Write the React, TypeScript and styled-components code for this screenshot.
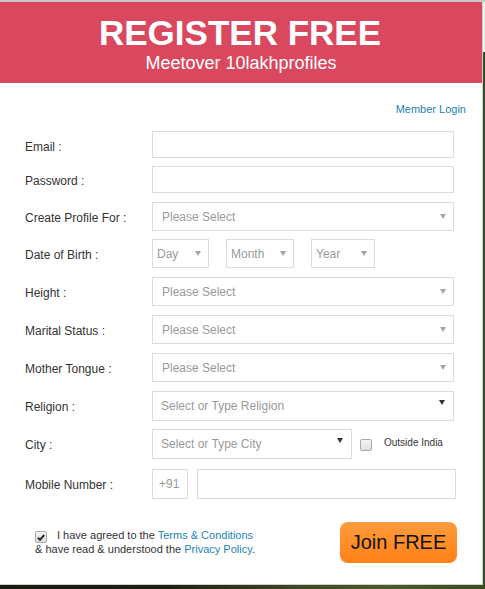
import React from "react";
import styled, { createGlobalStyle } from "styled-components";

const Global = createGlobalStyle`
  html, body { margin: 0; padding: 0; }
  body {
    font-family: "Liberation Sans", Arial, sans-serif;
    background:
      linear-gradient(#efefef, #efefef) top right / 10px 52px no-repeat,
      linear-gradient(90deg, #1a1a0e 0%, #202010 35%, #3d4522 60%, #4c5b2b 80%, #3b4a20 100%);
  }
`;

const Page = styled.div`
  border-top: 2px solid #c9c6c6;
  min-height: 587px;
`;

const Modal = styled.div`
  width: 482px;
  height: 582px;
  background: #fff;
  border-right: 1px solid #cfcfcf;
  border-bottom: 1px solid #cfcfcf;
  display: flex;
  flex-direction: column;
`;

const Header = styled.div`
  background: #d9485e;
  color: #fff;
  text-align: center;
  padding: 11px 0 10px;
`;

const Title = styled.div`
  font-size: 35px;
  line-height: 40px;
  font-weight: bold;
  margin-left: -2px;
`;

const Subtitle = styled.div`
  font-size: 18px;
  line-height: 20px;
`;

const LoginBar = styled.div`
  margin-top: 20px;
  padding-right: 16px;
  text-align: right;
  font-size: 11px;
  line-height: 13px;
`;

const Link = styled.a`
  color: #1d7fb8;
  text-decoration: none;
`;

const Rows = styled.div`
  margin-top: 15px;
  padding: 0 28px 0 25px;
  display: flex;
  flex-direction: column;
`;

const Row = styled.div<{ $mb?: number }>`
  display: grid;
  grid-template-columns: 127px 1fr;
  align-items: center;
  margin-bottom: ${(p) => p.$mb ?? 9}px;
`;

const Label = styled.div<{ $down?: number }>`
  font-size: 12px;
  color: #333;
  padding-top: ${(p) => p.$down ?? 2}px;
`;

const TextInput = styled.div<{ $h?: number }>`
  height: ${(p) => (p.$h ?? 27) - 2}px;
  border: 1px solid #dcdcdc;
  background: #fff;
`;

const SelectBox = styled.div<{ $w?: number; $h?: number; $pl?: number }>`
  box-sizing: border-box;
  width: ${(p) => (p.$w ? `${p.$w}px` : "auto")};
  height: ${(p) => p.$h ?? 29}px;
  border: 1px solid #dcdcdc;
  display: flex;
  align-items: center;
  justify-content: space-between;
  padding: 0 7px 0 ${(p) => p.$pl ?? 9}px;
  font-size: 12px;
  color: #9a9a9a;
`;

const Arrow = styled.span`
  width: 0;
  height: 0;
  border-left: 3px solid transparent;
  border-right: 3px solid transparent;
  border-top: 5px solid #a5a5a5;
`;

const ChosenBox = styled.div<{ $w?: number }>`
  box-sizing: border-box;
  width: ${(p) => (p.$w ? `${p.$w}px` : "auto")};
  height: 30px;
  border: 1px solid #dcdcdc;
  display: flex;
  align-items: center;
  justify-content: space-between;
  padding: 0 8px 0 8px;
  font-size: 12px;
  color: #9a9a9a;
`;

const DarkArrow = styled.span`
  align-self: flex-start;
  margin-top: 8px;
  width: 0;
  height: 0;
  border-left: 3.5px solid transparent;
  border-right: 3.5px solid transparent;
  border-top: 5px solid #333;
`;

const DobGroup = styled.div`
  display: flex;
  gap: 17px;
`;

const CityGroup = styled.div`
  display: flex;
  align-items: center;
`;

const CheckBox = styled.span`
  box-sizing: border-box;
  display: flex;
  align-items: center;
  justify-content: center;
  flex: none;
  width: 12px;
  height: 12px;
  border: 1px solid #a9a9a9;
  border-radius: 2px;
  background: linear-gradient(#f4f4f4, #dedede);
`;

const OutsideLabel = styled.span`
  font-size: 10px;
  color: #333;
  margin-left: 12px;
  margin-top: -3px;
`;

const CityCheck = styled(CheckBox)`
  margin-left: 8px;
  margin-top: 2px;
`;

const MobileGroup = styled.div`
  display: flex;
  gap: 9px;
  margin-right: -2px;
`;

const CodeBox = styled.div`
  box-sizing: border-box;
  width: 36px;
  height: 30px;
  border: 1px solid #dcdcdc;
  display: flex;
  align-items: center;
  padding-left: 6px;
  font-size: 12px;
  color: #9a9a9a;
`;

const MobileInput = styled.div`
  box-sizing: border-box;
  flex: 1;
  height: 30px;
  border: 1px solid #dcdcdc;
`;

const Footer = styled.div`
  margin-top: 23px;
  padding: 0 25px 0 35px;
  display: flex;
  align-items: center;
  justify-content: space-between;
`;

const Terms = styled.div`
  font-size: 11px;
  line-height: 13px;
  color: #333;
`;

const TermsLine = styled.div`
  display: flex;
  align-items: flex-start;
  white-space: pre;
`;

const TermsCheck = styled(CheckBox)`
  margin-top: 2px;
  margin-right: 10px;
`;

const JoinButton = styled.button`
  width: 117px;
  height: 41px;
  border: none;
  border-radius: 8px;
  background: linear-gradient(#ff9c3d, #ff8016);
  color: #111;
  font-family: "Liberation Sans", Arial, sans-serif;
  font-size: 20px;
  padding: 0;
  cursor: pointer;
`;

const Check = () => (
  <svg width="8" height="7" viewBox="0 0 8 7">
    <path d="M0.8 3.6 L3 5.8 L7.2 1" fill="none" stroke="#2a2a2a" strokeWidth="2" />
  </svg>
);

const Select = ({ text }: { text: string }) => (
  <SelectBox>
    <span>{text}</span>
    <Arrow />
  </SelectBox>
);

export default function App() {
  return (
    <>
      <Global />
      <Page>
        <Modal>
          <Header>
            <Title>REGISTER FREE</Title>
            <Subtitle>Meetover 10lakhprofiles</Subtitle>
          </Header>
          <LoginBar>
            <Link href="#">Member Login</Link>
          </LoginBar>
          <Rows>
            <Row $mb={8}>
              <Label $down={4}>Email :</Label>
              <TextInput />
            </Row>
            <Row>
              <Label $down={3}>Password :</Label>
              <TextInput />
            </Row>
            <Row $mb={8}>
              <Label>Create Profile For :</Label>
              <Select text="Please Select" />
            </Row>
            <Row>
              <Label>Date of Birth :</Label>
              <DobGroup>
                <SelectBox $w={57} $pl={4}>
                  <span>Day</span>
                  <Arrow />
                </SelectBox>
                <SelectBox $w={68} $pl={4}>
                  <span>Month</span>
                  <Arrow />
                </SelectBox>
                <SelectBox $w={64} $pl={4}>
                  <span>Year</span>
                  <Arrow />
                </SelectBox>
              </DobGroup>
            </Row>
            <Row>
              <Label>Height :</Label>
              <Select text="Please Select" />
            </Row>
            <Row>
              <Label>Marital Status :</Label>
              <Select text="Please Select" />
            </Row>
            <Row>
              <Label>Mother Tongue :</Label>
              <Select text="Please Select" />
            </Row>
            <Row $mb={8}>
              <Label>Religion :</Label>
              <ChosenBox>
                <span>Select or Type Religion</span>
                <DarkArrow />
              </ChosenBox>
            </Row>
            <Row $mb={10}>
              <Label>City :</Label>
              <CityGroup>
                <ChosenBox $w={200}>
                  <span>Select or Type City</span>
                  <DarkArrow />
                </ChosenBox>
                <CityCheck />
                <OutsideLabel>Outside India</OutsideLabel>
              </CityGroup>
            </Row>
            <Row $mb={0}>
              <Label>Mobile Number :</Label>
              <MobileGroup>
                <CodeBox>+91</CodeBox>
                <MobileInput />
              </MobileGroup>
            </Row>
          </Rows>
          <Footer>
            <Terms>
              <TermsLine>
                <TermsCheck>
                  <Check />
                </TermsCheck>
                <span>
                  I have agreed to the <Link href="#">Terms &amp; Conditions</Link>
                </span>
              </TermsLine>
              <TermsLine>
                <span>
                  &amp; have read &amp; understood the <Link href="#">Privacy Policy</Link>.
                </span>
              </TermsLine>
            </Terms>
            <JoinButton>Join FREE</JoinButton>
          </Footer>
        </Modal>
      </Page>
    </>
  );
}
